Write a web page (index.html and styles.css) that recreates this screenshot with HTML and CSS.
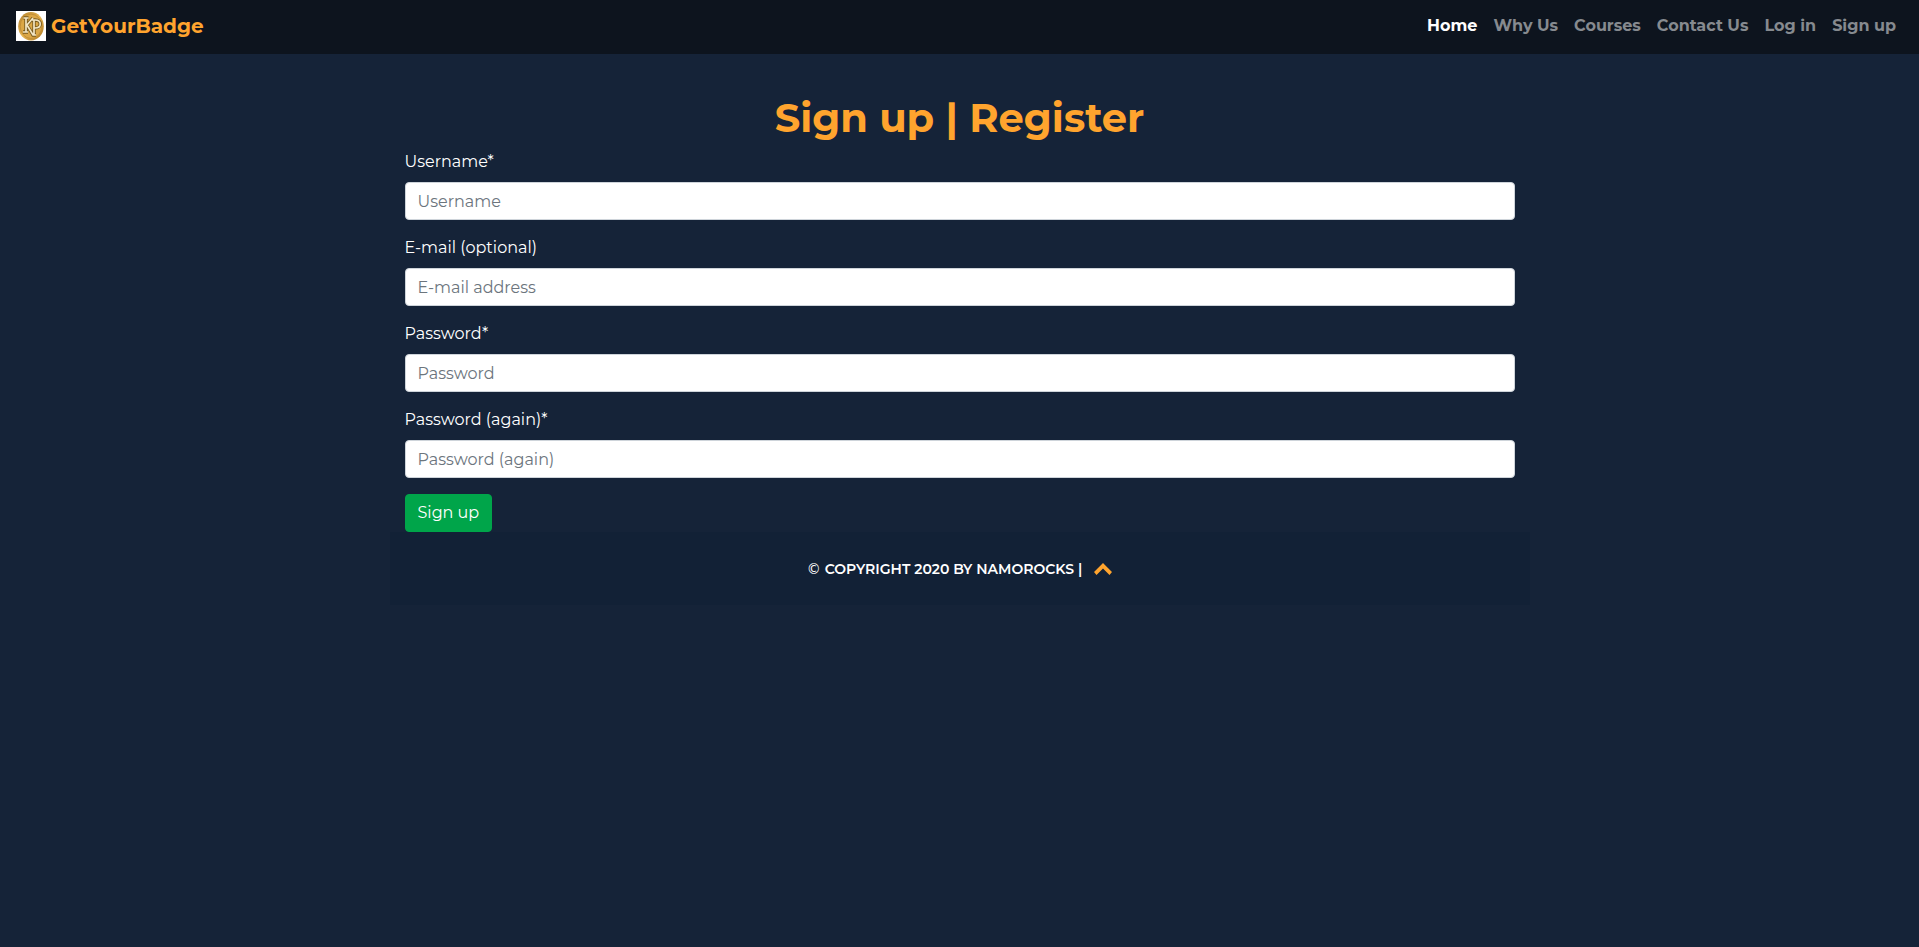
FILE: index.html
```html
<!DOCTYPE html>
<html lang="en">
<head>
<meta charset="utf-8">
<meta name="viewport" content="width=device-width, initial-scale=1">
<title>GetYourBadge | Sign up</title>
<link rel="stylesheet" href="styles.css">
</head>
<body>
<header class="navbar">
  <a class="brand" href="#">
    <svg class="brand-logo" viewBox="0 0 30 30" aria-hidden="true">
      <defs>
        <linearGradient id="gold" x1="0" y1="0" x2="1" y2="1">
          <stop offset="0" stop-color="#b07f2c"/>
          <stop offset=".5" stop-color="#e6b552"/>
          <stop offset="1" stop-color="#a8731c"/>
        </linearGradient>
      </defs>
      <rect width="30" height="30" fill="#fff"/>
      <ellipse cx="15" cy="15.3" rx="12.8" ry="14.2" fill="url(#gold)"/>
      <ellipse cx="15" cy="15.3" rx="10.8" ry="12.2" fill="#dba746" stroke="#c38f37"/>
      <g fill="none" stroke="#75591f" stroke-width="3.4">
        <path d="M10 7v14M7.500 7h5M7 21h5M17 7l-6 7 6 10h3M18 9v15M16 9h3c7 0 7 8 0 8h-1"/>
      </g>
      <g fill="none" stroke="#f3e6c4" stroke-width="1.700">
        <path d="M10 7v14M7.500 7h5M7 21h5M17 7l-6 7 6 10h3M18 9v15M16 9h3c7 0 7 8 0 8h-1"/>
      </g>
    </svg>
    <span>GetYourBadge</span>
  </a>
  <nav class="nav-links" aria-label="Main">
    <a class="nav-link active" href="#">Home</a>
    <a class="nav-link" href="#">Why Us</a>
    <a class="nav-link" href="#">Courses</a>
    <a class="nav-link" href="#">Contact Us</a>
    <a class="nav-link" href="#">Log in</a>
    <a class="nav-link" href="#">Sign up</a>
  </nav>
</header>
<main class="container">
  <h1 class="title">Sign up | Register</h1>
  <form class="form">
    <div class="form-group">
      <label for="username">Username*</label>
      <input class="form-control" id="username" type="text" placeholder="Username">
    </div>
    <div class="form-group">
      <label for="email">E-mail (optional)</label>
      <input class="form-control" id="email" type="email" placeholder="E-mail address">
    </div>
    <div class="form-group">
      <label for="password1">Password*</label>
      <input class="form-control" id="password1" type="password" placeholder="Password">
    </div>
    <div class="form-group">
      <label for="password2">Password (again)*</label>
      <input class="form-control" id="password2" type="password" placeholder="Password (again)">
    </div>
    <button class="btn" type="submit">Sign up</button>
  </form>
  <footer class="footer">
    <p class="copyright"><span class="mark">©</span> Copyright 2020 by NamoRocks |</p>
    <a class="to-top" href="#" aria-label="Back to top">
      <svg viewBox="0 0 18 12" aria-hidden="true"><path d="M9 0l9 9-2.500 3L9 5.600 2.500 12 0 9z" fill="#ffa42e"/></svg>
    </a>
  </footer>
</main>
</body>
</html>
```
FILE: styles.css
```css
* { box-sizing: border-box; }

body {
  margin: 0;
  min-height: 100vh;
  background: #152338;
  color: #fff;
  font: 400 16px/24px Montserrat, Inter, "Open Sans", sans-serif;
}

.navbar {
  display: flex;
  align-items: center;
  justify-content: space-between;
  padding: 6px 15px 8px 16px;
  background: #0d141e;
}

.brand {
  display: flex;
  align-items: center;
  gap: 5px;
  color: #ffa42e;
  font-size: 20px;
  font-weight: 700;
  text-decoration: none;
}

.brand-logo { width: 30px; height: 30px; }

.nav-links { display: flex; }

.nav-link {
  padding: 8px;
  color: #868a8f;
  font-weight: 700;
  text-decoration: none;
}

.nav-link.active { color: #fff; }

.container {
  max-width: 1140px;
  margin: 0 auto;
  padding-top: 40px;
}

.title {
  margin: 0 0 8px;
  color: #ffa42e;
  font-size: 40px;
  font-weight: 700;
  line-height: 48px;
  text-align: center;
}

.form { padding: 0 15px; }

.form-group {
  display: flex;
  flex-direction: column;
  gap: 8px;
  margin-bottom: 16px;
}

.form-group label { align-self: flex-start; }

.form-control {
  width: 100%;
  height: 38px;
  padding: 6px 12px;
  border: 1px solid #ced4da;
  border-radius: 4px;
  background: #fff;
  color: #495057;
  font: inherit;
}

.form-control::placeholder { color: #6c757d; opacity: 1; }

.btn {
  display: block;
  padding: 6px 12px;
  border: 1px solid #00a54a;
  border-radius: 4px;
  background: #00a54a;
  color: #fff;
  font: inherit;
}

.footer {
  display: flex;
  align-items: center;
  justify-content: center;
  gap: 12px;
  padding: 25px 0 24px;
  background: #122136;
}

.copyright {
  margin: 0;
  font-size: 14px;
  font-weight: 600;
  text-transform: uppercase;
}

.mark {
  font-family: "DejaVu Sans", sans-serif;
  font-weight: 400;
}

.to-top { display: flex; }

.to-top svg { width: 18px; height: 12px; }
```
